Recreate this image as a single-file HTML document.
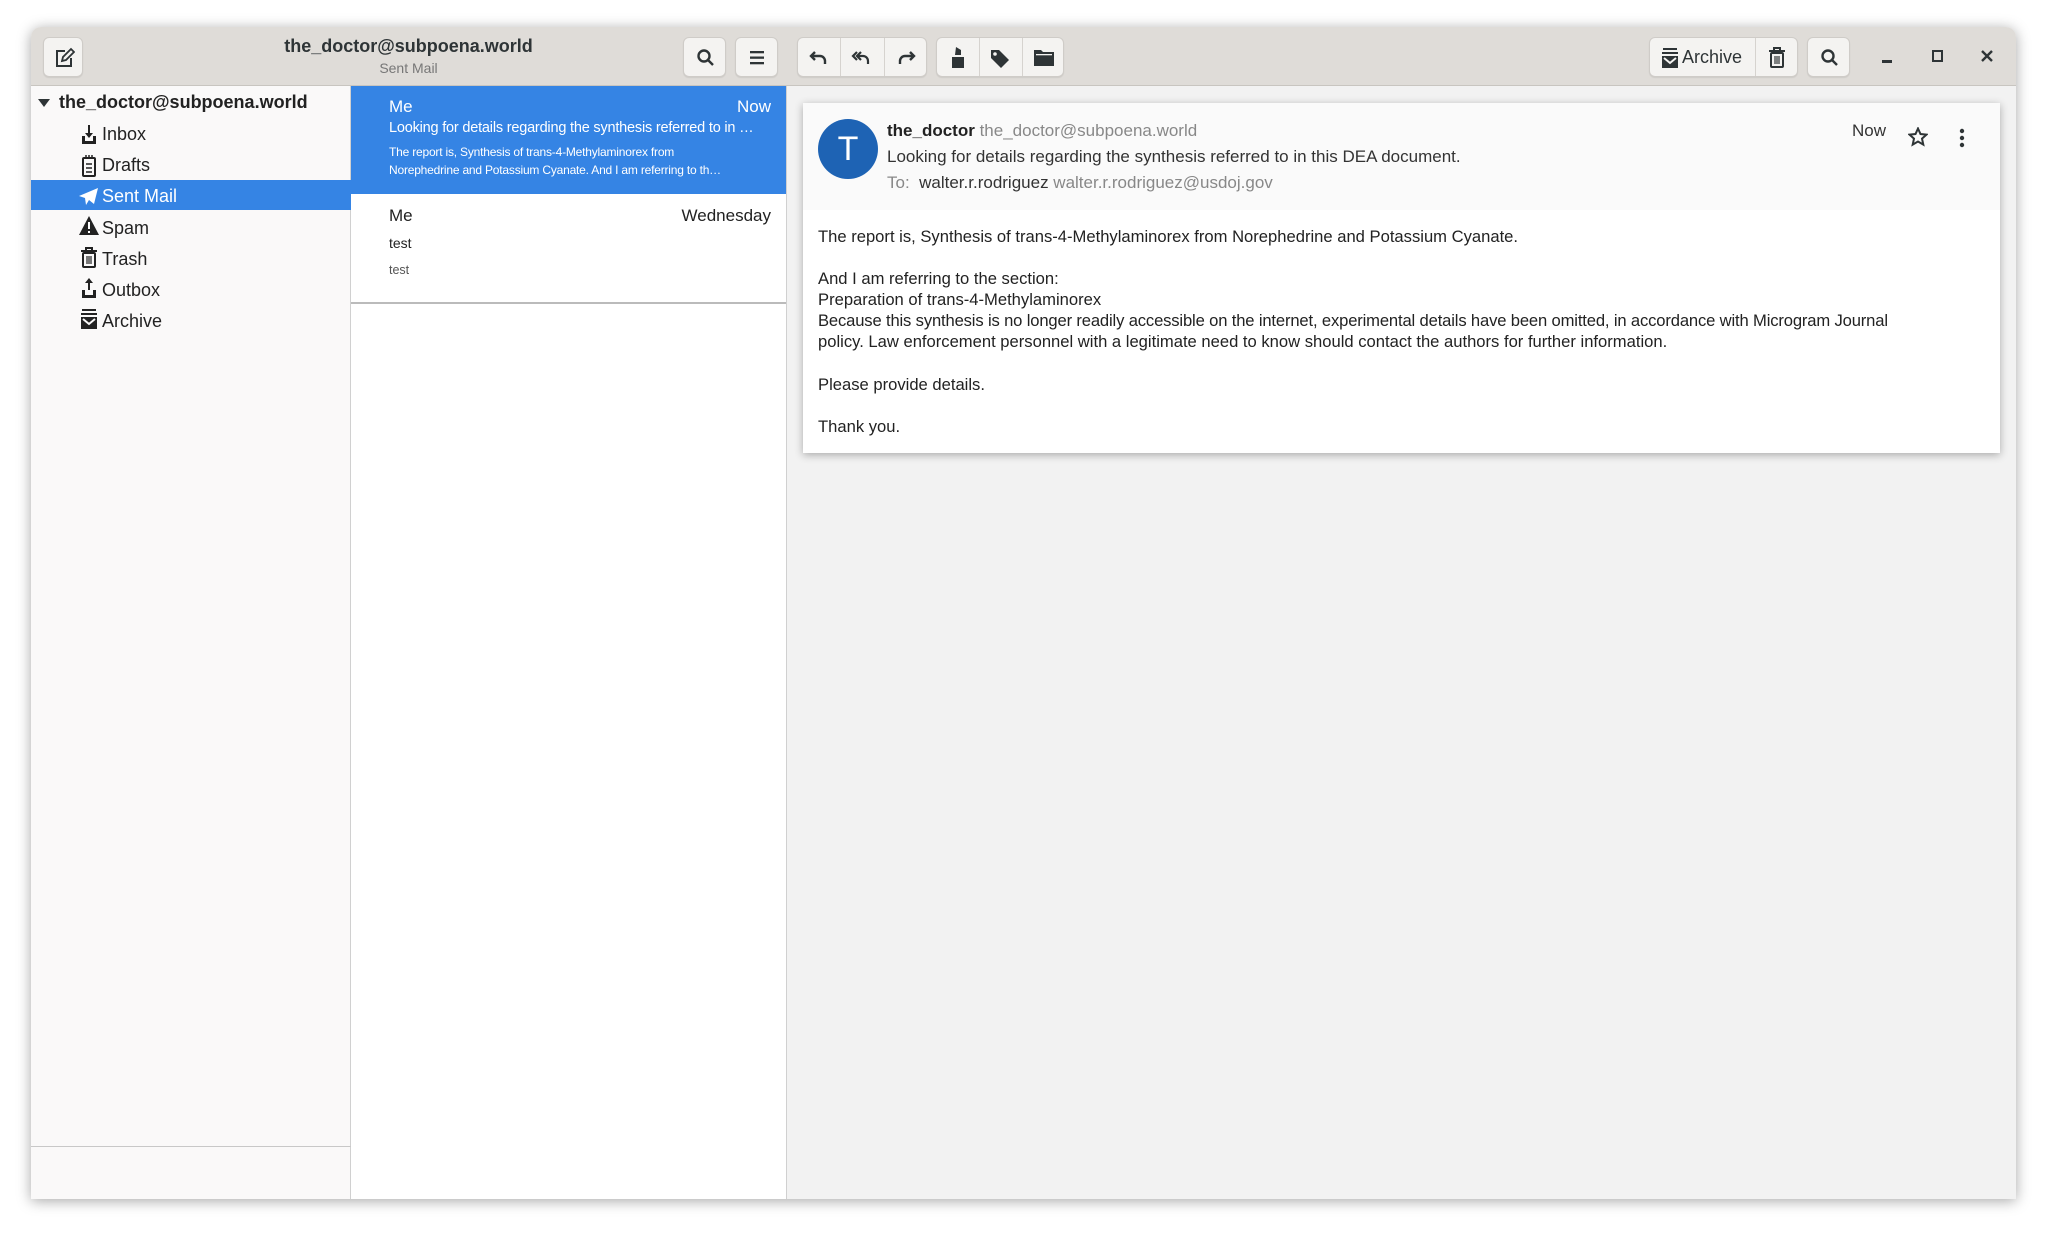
<!DOCTYPE html>
<html><head><meta charset="utf-8"><style>
*{box-sizing:border-box;margin:0;padding:0}
body{width:2048px;height:1235px;background:#fff;font-family:"Liberation Sans",sans-serif;position:relative;overflow:hidden;color:#2e3436}
.win{position:absolute;left:31px;top:27px;width:1985px;height:1172px;border-radius:10px 10px 0 0;overflow:hidden;box-shadow:0 2px 14px rgba(0,0,0,.35);background:#fff}
.hb{position:absolute;left:0;top:0;width:100%;height:59px;background:#dfdcd8;border-bottom:1px solid #c8c5c0}
.btn{position:absolute;top:10px;height:40px;background:#f4f3f1;border:1px solid #cfccc8;border-radius:6px;box-shadow:0 1px 1px rgba(0,0,0,.08)}
.btn .d{position:absolute;top:0;bottom:0;border-left:1px solid #d6d3cf}
.ic{position:absolute;top:10px}
.abs{position:absolute;white-space:nowrap}
.side{position:absolute;left:0;top:59px;width:320px;height:1113px;background:#faf9f9;border-right:1px solid #d0d0d0}
.list{position:absolute;left:320px;top:59px;width:436px;height:1113px;background:#fff;border-right:1px solid #d0d0d0}
.read{position:absolute;left:756px;top:59px;width:1229px;height:1113px;background:#f2f2f2}
.it{position:absolute;left:71px;font-size:18px;color:#222}
.card{position:absolute;left:16px;top:17px;width:1197px;height:350px;background:#fff;box-shadow:0 2px 8px rgba(0,0,0,.3)}
.bl{position:absolute;left:15px;font-size:16.6px;color:#222;white-space:nowrap}
</style></head><body>
<div class="win">
<div class="hb">
 <div class="btn" style="left:12px;width:40px"><svg class="ic" style="left:9px;top:9px" width="22" height="22" viewBox="0 0 22 22" fill="none" stroke="#2e3436" stroke-width="2"><path d="M12 4H4v15h14v-8"/><path d="M9 14l1-4 8-8 3 3-8 8z" stroke-width="1.8"/></svg></div>
 <div class="abs" style="left:225px;top:9px;width:305px;text-align:center;font-weight:bold;font-size:18px;color:#2e3436">the_doctor@subpoena.world</div>
 <div class="abs" style="left:225px;top:33px;width:305px;text-align:center;font-size:14px;color:#777">Sent Mail</div>
 <div class="btn" style="left:652px;width:43px"><svg class="ic" style="left:12px;top:10px" width="20" height="20" viewBox="0 0 20 20" fill="none" stroke="#2e3436" stroke-width="2.4"><circle cx="8" cy="8" r="5.5"/><path d="M12 12l5 5"/></svg></div>
 <div class="btn" style="left:704px;width:43px"><svg class="ic" style="left:14px;top:12px" width="14" height="16" viewBox="0 0 14 16" fill="#2e3436"><rect y="1" width="14" height="2.3"/><rect y="6.5" width="14" height="2.3"/><rect y="12" width="14" height="2.3"/></svg></div>
 <div class="btn" style="left:766px;width:130px"><div class="d" style="left:42px"></div><div class="d" style="left:86px"></div>
  <svg class="ic" style="left:11px;top:11px" width="20" height="18" viewBox="0 0 20 18" fill="none" stroke="#2e3436" stroke-width="2.4"><path d="M6 3L2 7l4 4"/><path d="M2 7h9a5 5 0 0 1 5 5v3"/></svg>
  <svg class="ic" style="left:53px;top:11px" width="22" height="18" viewBox="0 0 22 18" fill="none" stroke="#2e3436" stroke-width="2.2"><path d="M6 3L2 7l4 4"/><path d="M10 3L6 7l4 4"/><path d="M6 7h6a5 5 0 0 1 5 5v3"/></svg>
  <svg class="ic" style="left:98px;top:11px" width="20" height="18" viewBox="0 0 20 18" fill="none" stroke="#2e3436" stroke-width="2.4"><path d="M14 3l4 4-4 4"/><path d="M18 7H9a5 5 0 0 0-5 5v3"/></svg>
 </div>
 <div class="btn" style="left:905px;width:128px"><div class="d" style="left:42px"></div><div class="d" style="left:85px"></div>
  <svg class="ic" style="left:14px;top:9px" width="14" height="22" viewBox="0 0 14 22" fill="#2e3436"><path d="M5 0l5 3v5H4z"/><rect x="1" y="10" width="12" height="11"/></svg>
  <svg class="ic" style="left:52px;top:10px" width="22" height="22" viewBox="0 0 22 22" fill="#2e3436"><path d="M2 2h8l10 10-8 8L2 10z"/><circle cx="6" cy="6" r="1.8" fill="#f4f3f1"/></svg>
  <svg class="ic" style="left:96px;top:11px" width="22" height="18" viewBox="0 0 22 18" fill="#2e3436"><path d="M1 1h7l2 2h11v14H1z"/><rect x="3" y="5" width="16" height="1.3" fill="#f4f3f1"/></svg>
 </div>
 <div class="btn" style="left:1618px;width:149px"><div class="d" style="left:105px"></div>
  <svg class="ic" style="left:11px;top:10px" width="18" height="20" viewBox="0 0 18 20" fill="#2e3436"><rect x="2" y="0" width="14" height="2"/><rect x="1" y="4" width="16" height="2"/><path d="M1 8h16v12H1z"/><path d="M3 10l6 5 6-5" stroke="#f4f3f1" stroke-width="2" fill="none"/></svg>
  <div class="abs" style="left:32px;top:9px;font-size:18px;color:#2e3436">Archive</div>
  <svg class="ic" style="left:118px;top:9px" width="18" height="22" viewBox="0 0 18 22" fill="none" stroke="#2e3436" stroke-width="2"><path d="M1 4h16M6 4V1h6v3"/><rect x="3" y="6" width="12" height="14" rx="1"/><path d="M7 9v8M9 9v8M11 9v8" stroke-width="1.2"/></svg>
 </div>
 <div class="btn" style="left:1776px;width:43px"><svg class="ic" style="left:12px;top:10px" width="20" height="20" viewBox="0 0 20 20" fill="none" stroke="#2e3436" stroke-width="2.4"><circle cx="8" cy="8" r="5.5"/><path d="M12 12l5 5"/></svg></div>
 <div class="abs" style="left:1851px;top:33px;width:10px;height:3px;background:#2e3436"></div>
 <div class="abs" style="left:1901px;top:23px;width:11px;height:12px;border:2.5px solid #2e3436"></div>
 <svg class="abs" style="left:1950px;top:23px" width="12" height="12" viewBox="0 0 12 12" stroke="#2e3436" stroke-width="2.4"><path d="M1 1l10 10M11 1L1 11"/></svg>
</div>

<div class="side">
 <svg class="abs" style="left:7px;top:13px" width="12" height="10" viewBox="0 0 12 10" fill="#2e3436"><path d="M0 0h12L6 8z"/></svg>
 <div class="abs" style="left:28px;top:6px;font-size:18px;font-weight:bold;color:#222">the_doctor@subpoena.world</div>
 <div class="abs" style="left:0;top:94px;width:320px;height:30px;background:#3584e4"></div>
 <svg class="abs" style="left:50px;top:39px" width="16" height="20" viewBox="0 0 16 20" fill="#222"><path d="M7 0h2v8h3l-4 5-4-5h3z"/><path d="M1 11h3v5h8v-5h3v8H1z"/></svg>
 <div class="it" style="top:38px">Inbox</div>
 <svg class="abs" style="left:50px;top:69px" width="16" height="22" viewBox="0 0 16 22" fill="none" stroke="#222" stroke-width="2"><rect x="2" y="3" width="12" height="18" rx="1"/><path d="M5 0v4M8 0v4M11 0v4M5 9h6M5 13h6M5 17h6" stroke-width="1.5"/></svg>
 <div class="it" style="top:69px">Drafts</div>
 <svg class="abs" style="left:48px;top:102px" width="20" height="18" viewBox="0 0 20 18" fill="#fff"><path d="M19 0L0 8l6 2 1 7 3-5 5 4z"/></svg>
 <div class="it" style="top:100px;color:#fff">Sent Mail</div>
 <svg class="abs" style="left:48px;top:130px" width="20" height="20" viewBox="0 0 20 20"><path d="M10 0L20 19H0z" fill="#222"/><rect x="9" y="6" width="2" height="7" fill="#fff"/><rect x="9" y="15" width="2" height="2" fill="#fff"/></svg>
 <div class="it" style="top:132px">Spam</div>
 <svg class="abs" style="left:49px;top:161px" width="18" height="22" viewBox="0 0 18 22" fill="none" stroke="#222" stroke-width="2"><path d="M1 4h16M6 4V1h6v3"/><rect x="3" y="6" width="12" height="14" rx="1"/><path d="M7 9v8M9 9v8M11 9v8" stroke-width="1.2"/></svg>
 <div class="it" style="top:163px">Trash</div>
 <svg class="abs" style="left:50px;top:192px" width="16" height="21" viewBox="0 0 16 21" fill="#222"><path d="M8 0l4 5H9v7H7V5H4z"/><path d="M1 12h3v5h8v-5h3v8H1z"/></svg>
 <div class="it" style="top:194px">Outbox</div>
 <svg class="abs" style="left:49px;top:223px" width="18" height="21" viewBox="0 0 18 21" fill="#222"><rect x="2" y="0" width="14" height="2"/><rect x="1" y="4" width="16" height="2"/><path d="M1 8h16v12H1z"/><path d="M3 10l6 5 6-5" stroke="#faf9f9" stroke-width="2" fill="none"/></svg>
 <div class="it" style="top:225px">Archive</div>
 <div class="abs" style="left:0;top:1060px;width:320px;border-top:1px solid #c8c8c8"></div>
</div>

<div class="list">
 <div class="abs" style="left:0;top:0;width:435px;height:108px;background:#3584e4"></div>
 <div class="abs" style="left:38px;top:11px;font-size:17px;color:#fff">Me</div>
 <div class="abs" style="right:15px;top:11px;font-size:17px;color:#fff">Now</div>
 <div class="abs" style="left:38px;top:34px;font-size:14.5px;color:#fff;letter-spacing:-.2px">Looking for details regarding the synthesis referred to in …</div>
 <div class="abs" style="left:38px;top:59px;font-size:12px;color:#fff;letter-spacing:-.2px">The report is, Synthesis of trans-4-Methylaminorex from</div>
 <div class="abs" style="left:38px;top:77px;font-size:12px;color:#fff;letter-spacing:-.2px">Norephedrine and Potassium Cyanate. And I am referring to th…</div>
 <div class="abs" style="left:38px;top:120px;font-size:17px;color:#222">Me</div>
 <div class="abs" style="right:15px;top:120px;font-size:17px;color:#222">Wednesday</div>
 <div class="abs" style="left:38px;top:149px;font-size:14px;color:#222">test</div>
 <div class="abs" style="left:38px;top:177px;font-size:12.5px;color:#555">test</div>
 <div class="abs" style="left:0;top:216px;width:435px;border-top:2px solid #bbb"></div>
</div>

<div class="read">
 <div class="card">
  <div class="abs" style="left:0;top:0;width:1197px;height:107px;background:#fafafa"></div>
  <div class="abs" style="left:15px;top:16px;width:60px;height:60px;border-radius:50%;background:#1e63b4;color:#fff;font-size:34px;text-align:center;line-height:60px">T</div>
  <div class="abs" style="left:84px;top:18px;font-size:17px"><b style="color:#222">the_doctor</b> <span style="color:#888">the_doctor@subpoena.world</span></div>
  <div class="abs" style="left:84px;top:44px;font-size:17px;color:#333">Looking for details regarding the synthesis referred to in this DEA document.</div>
  <div class="abs" style="left:84px;top:70px;font-size:17px;color:#888">To:&nbsp; <span style="color:#333">walter.r.rodriguez</span> walter.r.rodriguez@usdoj.gov</div>
  <div class="abs" style="left:1049px;top:18px;font-size:17px;color:#333">Now</div>
  <svg class="abs" style="left:1105px;top:24px" width="20" height="20" viewBox="0 0 20 20" fill="none" stroke="#2e3436" stroke-width="2"><path d="M10 1.5l2.5 5.5 6 .6-4.5 4 1.3 6L10 14.5 4.7 17.6 6 11.6 1.5 7.6l6-.6z"/></svg>
  <svg class="abs" style="left:1156px;top:25px" width="6" height="20" viewBox="0 0 6 20" fill="#2e3436"><circle cx="3" cy="3" r="2.2"/><circle cx="3" cy="10" r="2.2"/><circle cx="3" cy="17" r="2.2"/></svg>
  <div class="bl" style="top:124px">The report is, Synthesis of trans-4-Methylaminorex from Norephedrine and Potassium Cyanate.</div>
  <div class="bl" style="top:166px">And I am referring to the section:</div>
  <div class="bl" style="top:187px">Preparation of trans-4-Methylaminorex</div>
  <div class="bl" style="top:208px;letter-spacing:-.15px">Because this synthesis is no longer readily accessible on the internet, experimental details have been omitted, in accordance with Microgram Journal</div>
  <div class="bl" style="top:229px">policy. Law enforcement personnel with a legitimate need to know should contact the authors for further information.</div>
  <div class="bl" style="top:272px">Please provide details.</div>
  <div class="bl" style="top:314px">Thank you.</div>
 </div>
</div>
</div>
</body></html>
